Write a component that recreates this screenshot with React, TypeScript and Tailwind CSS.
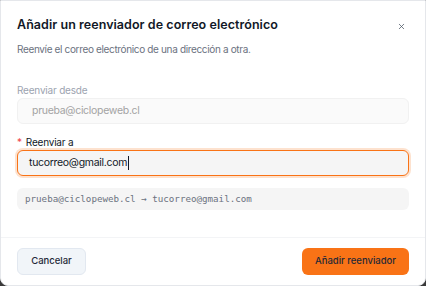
import { X } from "lucide-react";

const font = { fontFamily: "Inter, 'Noto Sans', sans-serif" };

export default function App() {
    return (
        <div className="h-[286px] w-[426px] bg-[#3a3a3a]" style={font}>
            <div className="flex h-[286px] w-[426px] flex-col rounded-b-lg border border-gray-200 bg-white">
                <div className="flex items-start justify-between px-4 pt-[15px]">
                    <div>
                        <h2 className="text-[12.5px] leading-[18px] font-semibold tracking-[0.05px] text-[#111827]">
                            Añadir un reenviador de correo electrónico
                        </h2>
                        <p className="mt-[8px] text-[10px] leading-[14px] tracking-[-0.35px] text-[#6b7280]">
                            Reenvíe el correo electrónico de una dirección a otra.
                        </p>
                    </div>

                    <button className="mt-[6px] mr-[3px] text-[#4b5563]">
                        <X size={9} strokeWidth={2} />
                    </button>
                </div>

                <div className="flex flex-1 flex-col px-4 pt-[27px]">
                    <label className="text-[10px] leading-[14px] tracking-[-0.2px] text-[#9ca3af]">
                        Reenviar desde
                    </label>
                    <div className="mt-[1px] flex h-[26px] items-center rounded-md border border-[#f1f1f1] bg-[#fafafa] px-[14px] text-[10.5px] tracking-[-0.3px] text-[#a3a3a3]">
                        prueba@ciclopeweb.cl
                    </div>

                    <label className="mt-[11px] text-[10px] leading-[14px] tracking-[-0.2px] text-[#111827]">
                        <span className="mr-[4px] text-[#ef4444]">*</span>
                        Reenviar a
                    </label>
                    <div className="mt-[1px] flex h-[26px] items-center rounded-md border border-[#f97316] bg-[#f5f5f5] px-[11px] text-[10.5px] tracking-[-0.3px] text-[#111827] shadow-[0_0_0_2px_#fde2cf]">
                        tucorreo@gmail.com
                        <span className="ml-[1px] h-[14px] w-[1px] bg-[#111827]" />
                    </div>

                    <div
                        className="mt-[12px] flex h-[22px] items-center rounded-md bg-[#f5f5f5] px-2 text-[9.2px] text-[#6b7280]"
                        style={{ fontFamily: "'DejaVu Sans Mono', 'Liberation Mono', monospace" }}
                    >
                        prueba@ciclopeweb.cl → tucorreo@gmail.com
                    </div>
                </div>

                <div className="flex items-center justify-between border-t border-gray-100 px-4 pt-[10px] pb-[10px]">
                    <button className="h-[27px] w-[69px] rounded-md border border-[#e2e8f0] bg-[#f1f5f9] text-[9.5px] font-medium text-[#1f2937]">
                        Cancelar
                    </button>
                    <button className="h-[27px] w-[107px] rounded-md bg-[#f97316] text-[9.5px] font-medium text-[#1f2937]">
                        Añadir reenviador
                    </button>
                </div>
            </div>
        </div>
    );
}
